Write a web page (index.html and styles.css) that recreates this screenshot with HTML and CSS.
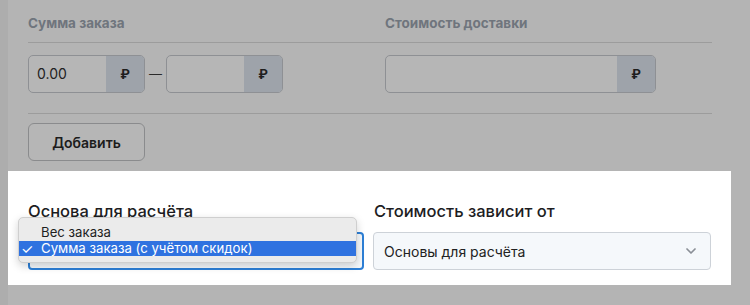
FILE: index.html
```html
<!DOCTYPE html>
<html lang="ru">
<head>
<meta charset="utf-8">
<link rel="stylesheet" href="styles.css">
</head>
<body>
<div class="page">
  <div class="top">
    <div class="row heads">
      <div class="head">Сумма заказа</div>
      <div class="head">Стоимость доставки</div>
    </div>
    <div class="rule"></div>
    <div class="row inputs">
      <div class="range">
        <div class="group small"><span class="val">0.00</span><span class="addon">₽</span></div>
        <span class="dash">—</span>
        <div class="group small"><span class="val"></span><span class="addon">₽</span></div>
      </div>
      <div class="group wide"><span class="val"></span><span class="addon">₽</span></div>
    </div>
    <div class="rule rule2"></div>
    <button class="btn">Добавить</button>
  </div>
  <div class="spot">
    <div class="field">
      <div class="label">Основа для расчёта</div>
      <div class="select focused"></div>
      <div class="menu">
        <div class="opt"><span class="check"></span>Вес заказа</div>
        <div class="opt sel"><span class="check">✓</span>Сумма заказа (с учётом скидок)</div>
      </div>
    </div>
    <div class="field">
      <div class="label">Стоимость зависит от</div>
      <div class="select plain">
        <span>Основы для расчёта</span>
        <svg class="chev" width="10" height="6" viewBox="0 0 10 6"><path d="M1 1l4 4 4-4" fill="none" stroke="#8a8f96" stroke-width="1.7" stroke-linecap="round" stroke-linejoin="round"/></svg>
      </div>
    </div>
  </div>
</div>
</body>
</html>
```

FILE: styles.css
```css
html, body {
  margin: 0;
  padding: 0;
}
body {
  background: #adadad;
  font-family: Inter, "Noto Sans", sans-serif;
  width: 750px;
  height: 305px;
  overflow: hidden;
}
.page {
  margin-left: 8px;
  background: #b4b4b4;
  height: 305px;
}
.top {
  width: 684px;
  padding: 15px 0 0 20px;
}
.row {
  display: grid;
  grid-template-columns: 337px 327px;
  column-gap: 20px;
}
.head {
  font-size: 13.5px;
  line-height: 16px;
  font-weight: 700;
  color: #6f757d;
}
.rule {
  height: 1px;
  background: #9c9c9c;
  margin-top: 11px;
}
.inputs {
  margin-top: 12px;
}
.range {
  display: flex;
  align-items: center;
}
.dash {
  width: 21px;
  text-align: center;
  font-size: 13px;
  color: #2a2a2a;
}
.group {
  display: flex;
  height: 38px;
  box-sizing: border-box;
  border: 1px solid #8e9094;
  border-radius: 5px;
  overflow: hidden;
  background: #b6b6b6;
}
.group.small {
  width: 117px;
}
.group.wide {
  width: 271px;
}
.val {
  flex: 1;
  font-size: 14px;
  line-height: 36px;
  padding-left: 8px;
  color: #222;
}
.addon {
  width: 38px;
  background: #9ea3aa;
  text-align: center;
  font-size: 13px;
  font-weight: 700;
  line-height: 36px;
  color: #1e1e1e;
}
.rule2 {
  margin-top: 20px;
}
.btn {
  display: block;
  margin-top: 9px;
  width: 117px;
  height: 38px;
  border: 1px solid #8a8b8d;
  border-radius: 6px;
  background: #b6b6b6;
  font-family: Inter, "Noto Sans", sans-serif;
  font-size: 14px;
  font-weight: 600;
  color: #1c1c1c;
  padding: 0;
}
.spot {
  margin-top: 10px;
  width: 723px;
  height: 114px;
  box-sizing: border-box;
  background: #fff;
  padding: 30px 20px 0 20px;
  display: grid;
  grid-template-columns: 336px 338px;
  column-gap: 9px;
}
.field {
  position: relative;
}
.label {
  font-size: 16.5px;
  line-height: 20px;
  font-weight: 500;
  color: #1d1d1f;
}
.field + .field .label {
  margin-left: 1px;
}
.select {
  margin-top: 11px;
  height: 38px;
  box-sizing: border-box;
  border-radius: 4px;
}
.select.focused {
  border: 2px solid #2d7fd6;
  background: #f5f8fb;
}
.select.plain {
  border: 1px solid #cdd2d8;
  background: #f5f8fb;
  display: flex;
  align-items: center;
  justify-content: space-between;
  padding: 0 14px 0 10px;
  font-size: 14px;
  color: #222;
}
.chev {
  display: block;
}
.menu {
  position: absolute;
  left: -10px;
  top: 16px;
  width: 339px;
  box-sizing: border-box;
  padding: 5px 0 6px;
  background: #ebebeb;
  border: 1px solid #cfcfcf;
  border-radius: 5px;
  box-shadow: 0 3px 8px rgba(0, 0, 0, 0.18);
  font-family: Inter, "Noto Sans", sans-serif;
  font-size: 13.2px;
  color: #1e1e1e;
}
.opt {
  display: flex;
  height: 18px;
  line-height: 18px;
}
.opt.sel {
  height: 15px;
  line-height: 15px;
  background: #2f72e0;
  color: #fff;
}
.check {
  width: 20px;
  padding-left: 2px;
  font-size: 14px;
  text-align: left;
}
```
